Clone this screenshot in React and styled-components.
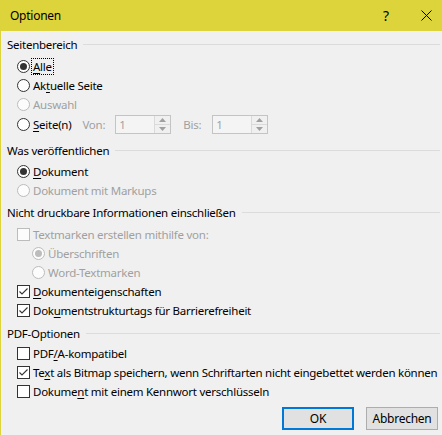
import React from 'react';
import styled, { createGlobalStyle } from 'styled-components';

const GlobalStyle = createGlobalStyle`
	html, body {
		margin: 0;
		padding: 0;
		background: #f0f0f0;
	}
	body {
		font-family: "Noto Sans", "DejaVu Sans", sans-serif;
		font-size: 11.5px;
		letter-spacing: -0.25px;
		color: #000;
	}
`;

const Dialog = styled.div`
	width: 442px;
	height: 435px;
	box-sizing: border-box;
	border-left: 1px solid #ddd43c;
	background: #f0f0f0;
	display: flex;
	flex-direction: column;
	overflow: hidden;
	white-space: nowrap;
`;

const TitleBar = styled.div`
	height: 31px;
	flex-shrink: 0;
	background: #ddd43c;
	display: flex;
	align-items: center;
	padding-left: 9px;
`;

const Title = styled.div`
	flex: 1;
	font-size: 12px;
`;

const TitleButton = styled.div`
	width: ${(p) => p.$w}px;
	height: 31px;
	display: flex;
	align-items: center;
	justify-content: center;
	font-size: 14px;
`;

const Content = styled.div`
	padding: 4px 2px 0 6px;
	display: flex;
	flex-direction: column;
`;

const Group = styled.div`
	display: flex;
	flex-direction: column;
	margin-bottom: ${(p) => p.$mb ?? 4}px;
`;

const GroupHeader = styled.div`
	height: 19px;
	display: flex;
	align-items: center;
	gap: 6px;
	margin-bottom: ${(p) => p.$mb ?? 2}px;

	&::after {
		content: '';
		flex: 1;
		height: 1px;
		background: #dcdcdc;
	}
`;

const Row = styled.div`
	height: ${(p) => p.$h || 19}px;
	display: flex;
	align-items: center;
	padding-left: ${(p) => (p.$indent ? 25 : 10)}px;
	color: ${(p) => (p.$disabled ? '#a0a0a0' : '#000')};
`;

const Label = styled.span`
	margin-left: 1px;
	padding: 0 1px;
	line-height: 15px;
	border: 1px dotted ${(p) => (p.$focus ? '#000' : 'transparent')};
`;

const RadioCircle = styled.span`
	width: 13px;
	height: 13px;
	box-sizing: border-box;
	border-radius: 50%;
	border: 1px solid ${(p) => (p.$disabled ? '#bcbcbc' : '#333')};
	background: ${(p) => (p.$disabled ? '#fcfcfc' : '#fff')};
	display: flex;
	align-items: center;
	justify-content: center;
	flex-shrink: 0;

	&::after {
		content: '';
		width: 7px;
		height: 7px;
		border-radius: 50%;
		background: ${(p) => (p.$disabled ? '#bcbcbc' : '#333')};
		display: ${(p) => (p.$checked ? 'block' : 'none')};
	}
`;

const CheckBox = styled.span`
	width: 13px;
	height: 13px;
	box-sizing: border-box;
	border: 1px solid ${(p) => (p.$disabled ? '#bcbcbc' : '#333')};
	background: ${(p) => (p.$disabled ? '#fcfcfc' : '#fff')};
	display: flex;
	align-items: center;
	justify-content: center;
	flex-shrink: 0;
`;

const Spin = styled.div`
	display: flex;
	width: 56px;
	height: 19px;
	box-sizing: border-box;
	border: 1px solid #c4c4c4;
	background: #f0f0f0;
	margin-left: ${(p) => p.$ml || 0}px;
`;

const SpinValue = styled.div`
	flex: 1;
	color: #a0a0a0;
	padding-left: 3px;
	line-height: 18px;
	border-right: 1px solid #dadada;
	background: #f4f4f4;
`;

const SpinArrows = styled.div`
	width: 15px;
	display: flex;
	flex-direction: column;
`;

const SpinArrow = styled.div`
	flex: 1;
	display: flex;
	align-items: center;
	justify-content: center;
	& + & {
		border-top: 1px solid #dadada;
	}
`;

const FieldLabel = styled.span`
	color: #a0a0a0;
	margin-left: ${(p) => p.$ml}px;
`;

const Footer = styled.div`
	display: flex;
	justify-content: flex-end;
	gap: 12px;
	padding: 6px 4px 0 0;
`;

const Button = styled.button`
	width: 72px;
	height: 23px;
	box-sizing: border-box;
	background: #e1e1e1;
	border: ${(p) => (p.$primary ? '2px solid #0078d7' : '1px solid #adadad')};
	font-family: inherit;
	font-size: 12px;
	letter-spacing: inherit;
	color: #000;
	padding: 0;
`;

const U = styled.span`
	text-decoration: underline;
	text-underline-offset: 2px;
`;

const Radio = ({ checked, disabled, focus, indent, h, children, extra }) => (
	<Row $disabled={disabled} $indent={indent} $h={h}>
		<RadioCircle $checked={checked} $disabled={disabled} />
		<Label $focus={focus}>{children}</Label>
		{extra}
	</Row>
);

const Check = ({ checked, disabled, children }) => (
	<Row $disabled={disabled}>
		<CheckBox $disabled={disabled}>
			{checked && (
				<svg width="11" height="11" viewBox="0 0 11 11">
					<path d="M1.5 5.5 L4 8 L9.5 2.5" fill="none" stroke="#333" strokeWidth="1.1" />
				</svg>
			)}
		</CheckBox>
		<Label>{children}</Label>
	</Row>
);

const Spinner = ({ ml }) => (
	<Spin $ml={ml}>
		<SpinValue>1</SpinValue>
		<SpinArrows>
			<SpinArrow>
				<svg width="7" height="4" viewBox="0 0 7 4">
					<path d="M0 4 L3.5 0 L7 4 Z" fill="#a0a0a0" />
				</svg>
			</SpinArrow>
			<SpinArrow>
				<svg width="7" height="4" viewBox="0 0 7 4">
					<path d="M0 0 L3.5 4 L7 0 Z" fill="#a0a0a0" />
				</svg>
			</SpinArrow>
		</SpinArrows>
	</Spin>
);

const App = () => {
	return (
		<Dialog>
			<GlobalStyle />
			<TitleBar>
				<Title>Optionen</Title>
				<TitleButton $w={48}>?</TitleButton>
				<TitleButton $w={32}>
					<svg width="11" height="11" viewBox="0 0 11 11">
						<path d="M0.5 0.5 L10.5 10.5 M10.5 0.5 L0.5 10.5" stroke="#000" strokeWidth="1" />
					</svg>
				</TitleButton>
			</TitleBar>
			<Content>
				<Group $mb={6}>
					<GroupHeader $mb={3}>Seitenbereich</GroupHeader>
					<Radio checked focus>
						<U>A</U>lle
					</Radio>
					<Radio>
						Ak<U>t</U>uelle Seite
					</Radio>
					<Radio disabled>Auswahl</Radio>
					<Radio
						h={21}
						extra={
							<>
								<FieldLabel $ml={9}>Von:</FieldLabel>
								<Spinner ml={10} />
								<FieldLabel $ml={12}>Bis:</FieldLabel>
								<Spinner ml={11} />
							</>
						}
					>
						<U>S</U>eite(n)
					</Radio>
				</Group>
				<Group $mb={3}>
					<GroupHeader>Was veröffentlichen</GroupHeader>
					<Radio checked>
						<U>D</U>okument
					</Radio>
					<Radio disabled>Dokument mit Markups</Radio>
				</Group>
				<Group>
					<GroupHeader $mb={3}>Nicht druckbare Informationen einschließen</GroupHeader>
					<Check disabled>Textmarken erstellen mithilfe von:</Check>
					<Radio disabled checked indent>
						Überschriften
					</Radio>
					<Radio disabled indent>
						Word-Textmarken
					</Radio>
					<Check checked>
						<U>D</U>okumenteigenschaften
					</Check>
					<Check checked>
						Dok<U>u</U>mentstrukturtags für Barrierefreiheit
					</Check>
				</Group>
				<Group $mb={0}>
					<GroupHeader $mb={1}>PDF-Optionen</GroupHeader>
					<Check>
						PDF<U>/</U>A-kompatibel
					</Check>
					<Check checked>
						Te<U>x</U>t als Bitmap speichern, wenn Schriftarten nicht eingebettet werden können
					</Check>
					<Check>
						Dokume<U>n</U>t mit einem Kennwort verschlüsseln
					</Check>
				</Group>
			</Content>
			<Footer>
				<Button $primary>OK</Button>
				<Button>Abbrechen</Button>
			</Footer>
		</Dialog>
	);
};

export default App;
